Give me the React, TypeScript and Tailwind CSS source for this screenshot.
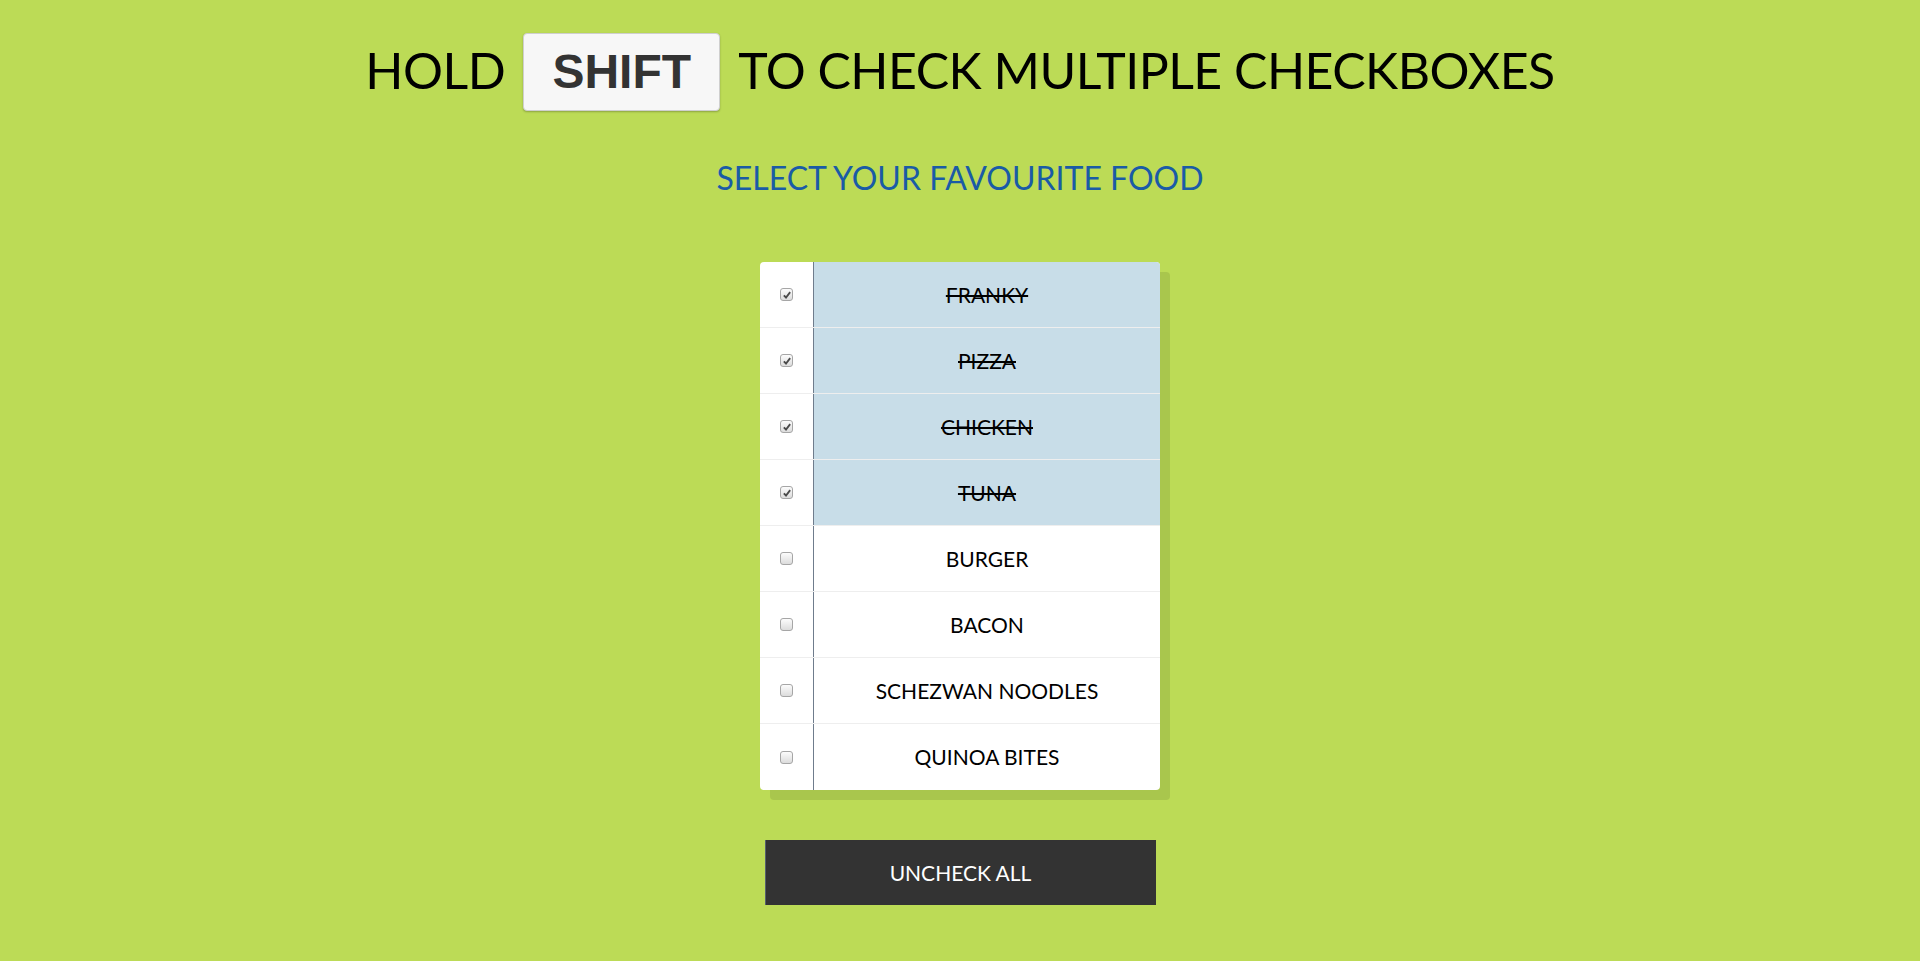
import { useState } from "react";

const foods = [
  "FRANKY",
  "PIZZA",
  "CHICKEN",
  "TUNA",
  "BURGER",
  "BACON",
  "SCHEZWAN NOODLES",
  "QUINOA BITES",
];

function Box({ checked }: { checked: boolean }) {
  return (
    <span className="flex h-[13px] w-[13px] items-center justify-center rounded-[3px] border border-[#a6a6a6] bg-gradient-to-b from-[#fcfcfc] to-[#dcdcdc]">
      {checked && (
        <svg viewBox="0 0 12 12" className="h-[10px] w-[10px]">
          <path d="M2.2 6.4 L4.8 9 L9.8 2.6" fill="none" stroke="#4a4a4a" strokeWidth="2.2" />
        </svg>
      )}
    </span>
  );
}

export default function App() {
  const [checked, setChecked] = useState<boolean[]>([true, true, true, true, false, false, false, false]);

  const toggle = (i: number) => setChecked((c) => c.map((v, j) => (j === i ? !v : v)));

  return (
    <div className="min-h-[961px] bg-[#bcdb56] pb-10 font-['Lato',sans-serif] text-black">
      <h1 className="flex items-center justify-center pt-[33px] text-[50px] font-normal leading-none tracking-[-0.5px]">
        <span className="-translate-y-[2px]">HOLD</span>
        <kbd className="mx-[18px] flex h-[78px] w-[197px] items-center justify-center rounded-[4px] border border-[#cfcfcf] bg-[#f7f7f7] font-['Liberation_Sans',sans-serif] text-[48px] font-bold tracking-normal text-[#333] shadow-[0_1px_2px_rgba(0,0,0,0.25)]">
          SHIFT
        </kbd>
        <span className="-translate-y-[2px]">TO CHECK MULTIPLE CHECKBOXES</span>
      </h1>

      <h2 className="mt-[51px] text-center text-[32px] leading-none text-[#1a5ba6]">
        SELECT YOUR FAVOURITE FOOD
      </h2>

      <div className="mx-auto mt-[68px] w-[400px] overflow-hidden rounded-[4px] bg-white shadow-[10px_10px_0_#a9c64d]">
        {foods.map((f, i) => (
          <div
            key={f}
            onClick={() => toggle(i)}
            className="flex h-[66px] cursor-pointer border-b border-[#eeeeee] last:border-b-0"
          >
            <div className="flex w-[53px] items-center justify-center">
              <Box checked={checked[i]} />
            </div>
            <div
              className={`flex flex-1 items-center justify-center border-l border-[#6f7c8c] text-[21px] ${
                checked[i] ? "bg-[#c8dde8] line-through decoration-2" : ""
              }`}
            >
              {f}
            </div>
          </div>
        ))}
      </div>

      <button
        type="button"
        onClick={() => setChecked(foods.map(() => false))}
        className="mx-auto mt-[50px] flex h-[65px] w-[391px] items-center justify-center border-l border-[#55606e] bg-[#333333] text-[21px] text-white"
      >
        UNCHECK ALL
      </button>
    </div>
  );
}
